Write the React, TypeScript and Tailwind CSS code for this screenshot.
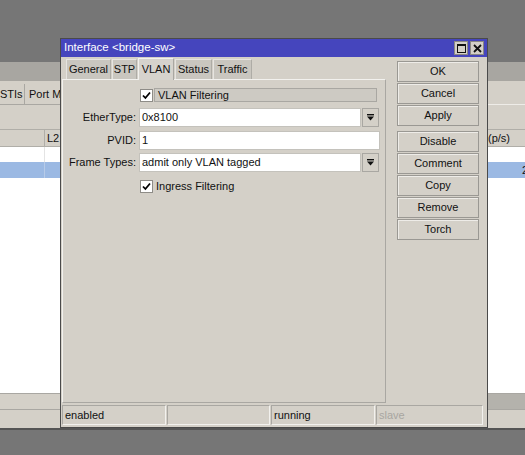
import React from "react";

const DropIcon = () => (
  <svg width="9" height="9" viewBox="0 0 9 9">
    <rect x="1" y="1" width="7" height="1.4" fill="#111" />
    <path d="M1 3.5 H8 L4.5 7.5 Z" fill="#111" />
  </svg>
);

const Check = () => (
  <div className="w-[13px] h-[13px] bg-white border border-[#8e8c87] flex items-center justify-center">
    <svg width="9" height="9" viewBox="0 0 9 9">
      <path d="M1 4.5 L3.4 7 L8 1.5" stroke="#000" strokeWidth="1.8" fill="none" />
    </svg>
  </div>
);

const Btn = ({ label }: { label: string }) => (
  <div className="h-[21px] w-[82px] flex items-center justify-center bg-[#d4d0c8] border border-[#9a9893] shadow-[inset_1px_1px_0_#eeece8] text-[11px] text-[#111]">
    {label}
  </div>
);

export default function App() {
  const tabs = [
    { t: "General", w: 45 },
    { t: "STP", w: 25 },
    { t: "VLAN", w: 36, sel: true },
    { t: "Status", w: 37 },
    { t: "Traffic", w: 39 },
  ];
  return (
    <div
      className="relative w-[525px] h-[455px] overflow-hidden bg-[#767676] text-[11px] text-[#111]"
      style={{ fontFamily: '"Liberation Sans", Arial, sans-serif' }}
    >
      {/* background window */}
      <div className="mt-[62px] h-[368px] flex flex-col bg-[#d4d0c8] border-b-2 border-[#555]">
        <div className="h-[19px] bg-[#a8a6a1]" />
        <div className="h-[3px]" />
        <div className="h-[21px] flex items-stretch">
          <div className="w-[25px] border-r border-b border-[#a9a7a2] flex items-center pl-[0px]">STIs</div>
          <div className="w-[40px] border-r border-b border-[#a9a7a2] flex items-center pl-[4px] whitespace-nowrap overflow-hidden">Port MSTI</div>
          <div className="flex-1 border-b border-[#eeece8]" />
        </div>
        <div className="h-[24px]" />
        <div className="h-[18px] flex items-stretch border-t border-[#b0aea8] border-b border-b-[#b0aea8]">
          <div className="w-[45px] border-r border-[#b0aea8]" />
          <div className="w-[442px] pl-[2px] flex items-center">L2</div>
          <div className="flex-1 flex items-center pl-[1px]">(p/s)</div>
        </div>
        <div className="flex-1 bg-white flex flex-col">
          <div className="h-[15px] flex">
            <div className="w-[45px] border-r border-[#e4e4e4]" />
          </div>
          <div className="h-[16px] bg-[#9bb9e3] flex">
            <div className="w-[45px] border-r border-[#b7cbe8]" />
            <div className="flex-1 flex justify-end items-center pr-[0px] -mr-[3px]">2</div>
          </div>
        </div>
        <div className="h-[16px] flex border-t border-[#a9a7a2]">
          <div className="flex-1 bg-[#d4d0c8]" />
          <div className="w-[38px] bg-[#b4b2ac]" />
        </div>
        <div className="h-[19px] bg-[#d4d0c8] border-t border-[#a9a7a2]" />
      </div>

      {/* dialog */}
      <div className="absolute left-[60px] top-[38px] w-[428px] h-[390px] bg-[#d4d0c8] border border-[#4a4a4a] flex flex-col">
        <div className="h-[18px] bg-[#4545bd] flex items-center justify-between pl-[3px] pr-[3px]">
          <span className="text-white text-[11.5px]">Interface &lt;bridge-sw&gt;</span>
          <div className="flex gap-[2px]">
            <div className="w-[14px] h-[14px] bg-[#d4d0c8] border border-[#8a8883] flex items-center justify-center">
              <div className="w-[9px] h-[9px] border border-[#111] border-t-2" />
            </div>
            <div className="w-[14px] h-[14px] bg-[#d4d0c8] border border-[#8a8883] flex items-center justify-center">
              <svg width="9" height="9" viewBox="0 0 9 9">
                <path d="M1 1 L8 8 M8 1 L1 8" stroke="#111" strokeWidth="1.8" />
              </svg>
            </div>
          </div>
        </div>
        <div className="flex-1 flex">
          <div className="ml-[1px] w-[324px] flex flex-col">
            <div className="h-[22px] flex items-end pl-[4px] gap-[1px]">
              {tabs.map((t) =>
                t.sel ? (
                  <div
                    key={t.t}
                    className="h-[22px] bg-[#d6d3cd] border-t border-l border-[#f2f1ee] border-r border-r-[#a9a7a2] flex items-center justify-center relative -mb-[1px] z-10"
                    style={{ width: t.w }}
                  >
                    {t.t}
                  </div>
                ) : (
                  <div
                    key={t.t}
                    className="h-[20px] bg-[#c9c6bf] border-t border-l border-[#e6e4e0] border-r border-r-[#aeaca6] flex items-center justify-center"
                    style={{ width: t.w }}
                  >
                    {t.t}
                  </div>
                )
              )}
            </div>
            <div className="h-[324px] border border-t-[#f2f1ee] border-l-[#f2f1ee] border-r-[#a9a7a2] border-b-[#a9a7a2] relative">
              <div className="pt-[8px] flex flex-col">
                <div className="flex items-center h-[14px] pl-[77px]">
                  <Check />
                  <div className="ml-[1px] w-[223px] h-[14px] bg-[#cdcac3] border border-[#a9a7a2] flex items-center pl-[3px]">
                    VLAN Filtering
                  </div>
                </div>
                <div className="flex items-center h-[19px] mt-[6px]">
                  <div className="w-[73px] text-right">EtherType:</div>
                  <div className="ml-[3px] w-[222px] h-[19px] bg-white border border-[#c4c2bc] flex items-center pl-[2px]">0x8100</div>
                  <div className="ml-[1px] w-[17px] h-[19px] border border-[#a9a7a2] flex items-center justify-center"><DropIcon /></div>
                </div>
                <div className="flex items-center h-[19px] mt-[4px]">
                  <div className="w-[73px] text-right">PVID:</div>
                  <div className="ml-[3px] w-[241px] h-[19px] bg-white border border-[#c4c2bc] flex items-center pl-[2px]">1</div>
                </div>
                <div className="flex items-center h-[19px] mt-[3px]">
                  <div className="w-[73px] text-right whitespace-nowrap">Frame Types:</div>
                  <div className="ml-[3px] w-[222px] h-[19px] bg-white border border-[#c4c2bc] flex items-center pl-[2px]">admit only VLAN tagged</div>
                  <div className="ml-[1px] w-[17px] h-[19px] border border-[#a9a7a2] flex items-center justify-center"><DropIcon /></div>
                </div>
                <div className="flex items-center h-[14px] mt-[7px] pl-[77px]">
                  <Check />
                  <div className="ml-[3px]">Ingress Filtering</div>
                </div>
              </div>
            </div>
          </div>
          <div className="ml-[11px] pt-[4px] flex flex-col">
            <div className="flex flex-col gap-[1px]">
              <Btn label="OK" />
              <Btn label="Cancel" />
              <Btn label="Apply" />
            </div>
            <div className="mt-[5px] flex flex-col gap-[1px]">
              <Btn label="Disable" />
              <Btn label="Comment" />
              <Btn label="Copy" />
              <Btn label="Remove" />
              <Btn label="Torch" />
            </div>
          </div>
        </div>
        <div className="h-[20px] mt-[1px] mb-[2px] ml-[1px] mr-[4px] flex gap-[1px]">
          <div className="w-[104px] border border-t-[#a9a7a2] border-l-[#a9a7a2] border-r-[#f2f1ee] border-b-[#f2f1ee] flex items-center pl-[2px]">enabled</div>
          <div className="w-[103px] border border-t-[#a9a7a2] border-l-[#a9a7a2] border-r-[#f2f1ee] border-b-[#f2f1ee]" />
          <div className="w-[104px] border border-t-[#a9a7a2] border-l-[#a9a7a2] border-r-[#f2f1ee] border-b-[#f2f1ee] flex items-center pl-[2px]">running</div>
          <div className="flex-1 border border-t-[#a9a7a2] border-l-[#a9a7a2] border-r-[#f2f1ee] border-b-[#f2f1ee] flex items-center pl-[2px] text-[#a8a6a1]">slave</div>
        </div>
      </div>
    </div>
  );
}
